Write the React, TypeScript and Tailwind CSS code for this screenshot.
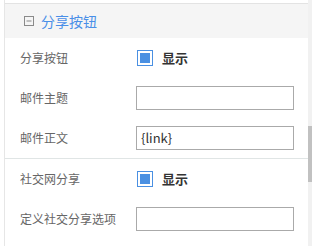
import React from "react";

const font = { fontFamily: '"Noto Sans CJK SC", "Noto Sans", sans-serif' };

function Check() {
  return (
    <div className="flex items-center">
      <span className="ml-px w-4 h-4 border border-[#4a90e2] flex items-center justify-center bg-white">
        <span className="w-[10px] h-[10px] bg-[#4a90e2]" />
      </span>
      <span className="ml-[9px] text-[13px] font-bold text-[#333]">显示</span>
    </div>
  );
}

function Field({ value = "" }: { value?: string }) {
  return (
    <div className="w-[158px] h-6 border border-[#aaaaaa] flex items-center px-[4px] text-[13px] text-[#333]">
      {value}
    </div>
  );
}

function Row({ label, children }: { label: string; children: React.ReactNode }) {
  return (
    <div className="h-10 flex items-center pl-[15px]">
      <span className="w-[116px] text-[12px] text-[#666] whitespace-nowrap">{label}</span>
      {children}
    </div>
  );
}

export default function App() {
  return (
    <div className="w-[312px] h-[246px] flex bg-white overflow-hidden" style={font}>
      {/* Panel */}
      <div className="flex-1 pl-1">
        <div className="h-full border-l border-[#e6e6e6]">
          <div className="h-[3px]" />
          <div className="border-t border-[#e3e3e3] h-[35px] bg-[#f5f5f5] flex items-center pl-[19px]">
            <svg width="10" height="10" viewBox="0 0 10 10" className="shrink-0">
              <rect x="0.5" y="0.5" width="9" height="9" fill="none" stroke="#8a8a8a" />
              <rect x="2.5" y="4.5" width="5" height="1" fill="#8a8a8a" />
            </svg>
            <span className="ml-[7px] text-[14px] text-[#4a8fe8]">分享按钮</span>
          </div>

          <Row label="分享按钮">
            <Check />
          </Row>
          <Row label="邮件主题">
            <Field />
          </Row>
          <Row label="邮件正文">
            <Field value="{link}" />
          </Row>

          <div className="border-t border-[#e0e5e5]" />

          <Row label="社交网分享">
            <Check />
          </Row>
          <Row label="定义社交分享选项">
            <Field />
          </Row>
        </div>
      </div>

      {/* Scrollbar */}
      <div className="w-1 h-full bg-[#f1f1f1] flex flex-col">
        <div className="mt-[126px] h-[56px] bg-[#c1c1c1]" />
      </div>
    </div>
  );
}
